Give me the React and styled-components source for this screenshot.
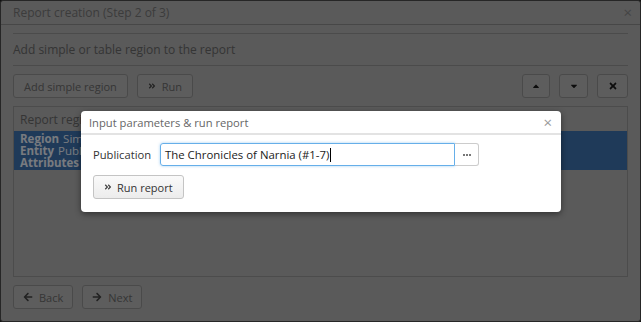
import React from "react";
import styled, { createGlobalStyle } from "styled-components";
import { FaAngleDoubleRight, FaArrowLeft, FaArrowRight, FaCaretDown, FaCaretUp, FaTimes } from "react-icons/fa";

const GlobalStyle = createGlobalStyle`
    html, body {
        margin: 0;
        padding: 0;
        background: #222;
    }
    body {
        font-family: "Open Sans", "Liberation Sans", sans-serif;
        font-size: 11px;
    }
    * { box-sizing: border-box; }
`;

const Stage = styled.div`
    position: relative;
    width: 641px;
    height: 322px;
    overflow: hidden;
`;

const Window = styled.div`
    width: 100%;
    height: 100%;
    display: flex;
    flex-direction: column;
    background: #b4b4b4;
    border: 1px solid #4c4c4c;
    border-radius: 3px;
    color: #6e6e6e;
`;

const TitleBar = styled.div`
    height: 24px;
    flex: none;
    display: flex;
    align-items: center;
    justify-content: space-between;
    padding: 0 8px 0 12px;
    border-bottom: 1px solid #8e8e8e;
    font-size: 12px;
    color: #787878;
`;

const CloseMark = styled.span`
    font-size: 15px;
    line-height: 1;
    color: ${p => p.$light ? "#9a9a9a" : "#8a8a8a"};
`;

const Body = styled.div`
    flex: 1;
    display: flex;
    flex-direction: column;
    padding: 8px 12px 12px 12px;
    min-height: 0;
`;

const Intro = styled.div`
    height: 33px;
    display: flex;
    align-items: center;
    border-top: 1px solid #969696;
    border-bottom: 1px solid #969696;
    font-size: 12px;
    color: #6a6a6a;
`;

const Toolbar = styled.div`
    display: flex;
    align-items: center;
    gap: 9px;
    margin-top: 8px;
`;

const Spacer = styled.div`
    flex: 1;
`;

const Button = styled.button`
    height: 24px;
    padding: 0 ${p => p.$pad || 10}px;
    display: inline-flex;
    align-items: center;
    justify-content: center;
    gap: 6px;
    font-family: inherit;
    font-size: 11px;
    color: #6c6c6c;
    background: #bababa;
    border: 1px solid #959595;
    border-radius: 3px;
    svg { color: #444; }
`;

const IconButton = styled(Button)`
    width: ${p => p.$w}px;
    padding: 0;
    svg { color: #1a1a1a; }
`;

const Table = styled.div`
    flex: 1;
    margin-top: 8px;
    border: 1px solid #989898;
    display: flex;
    flex-direction: column;
`;

const TableHead = styled.div`
    height: 24px;
    display: flex;
    align-items: center;
    padding: 0 6px;
    font-size: 12px;
    color: #6a6a6a;
`;

const SelectedRow = styled.div`
    background: #3e74b2;
    padding: 2px 6px 1px;
    color: #f0f6ff;
    line-height: 12px;
    font-size: 11.5px;
`;

const RowLine = styled.div`
    b { font-weight: 700; margin-right: 4px; }
`;

const Footer = styled.div`
    display: flex;
    gap: 9px;
    margin-top: 8px;
`;

const Backdrop = styled.div`
    position: absolute;
    inset: 0;
    background: rgba(0, 0, 0, 0.5);
`;

const Modal = styled.div`
    position: absolute;
    left: 81px;
    top: 111px;
    width: 480px;
    height: 101px;
    background: #fff;
    border-radius: 4px;
    box-shadow: 0 2px 6px rgba(0, 0, 0, 0.45);
    display: flex;
    flex-direction: column;
`;

const ModalHead = styled.div`
    height: 24px;
    display: flex;
    align-items: center;
    justify-content: space-between;
    padding: 0 9px 0 8px;
    border-bottom: 2px solid #e3e3e3;
    font-size: 11.2px;
    color: #666;
`;

const ModalBody = styled.div`
    padding: 8px 12px 12px;
    display: flex;
    flex-direction: column;
    align-items: flex-start;
    gap: 9px;
`;

const FieldRow = styled.div`
    display: flex;
    align-items: center;
`;

const Label = styled.span`
    width: 67px;
    font-size: 11.2px;
    color: #333;
`;

const TextBox = styled.div`
    width: 295px;
    height: 23px;
    display: flex;
    align-items: center;
    padding: 0 4px;
    border: 1px solid #66afe9;
    border-radius: 3px 0 0 3px;
    box-shadow: 0 0 3px rgba(102, 175, 233, 0.6);
    font-size: 11.4px;
    color: #222;
`;

const Caret = styled.span`
    display: inline-block;
    width: 1px;
    height: 14px;
    background: #000;
    margin-left: 1px;
`;

const DotsButton = styled.button`
    width: 24px;
    height: 23px;
    display: flex;
    align-items: center;
    justify-content: center;
    gap: 1px;
    background: #fff;
    border: 1px solid #ccc;
    border-left: none;
    border-radius: 0 3px 3px 0;
    padding: 0;
`;

const Dot = styled.i`
    width: 2px;
    height: 2px;
    background: #777;
`;

const RunButton = styled.button`
    height: 24px;
    padding: 0 10px;
    display: inline-flex;
    align-items: center;
    gap: 5px;
    font-family: inherit;
    font-size: 11px;
    color: #333;
    background: linear-gradient(#fafafa, #ececec);
    border: 1px solid #c4c4c4;
    border-radius: 3px;
    svg { color: #444; }
`;

export default function App() {
    return <>
        <GlobalStyle />
        <Stage>
            <Window>
                <TitleBar>
                    <span>Report creation (Step 2 of 3)</span>
                    <CloseMark>×</CloseMark>
                </TitleBar>
                <Body>
                    <Intro>Add simple or table region to the report</Intro>
                    <Toolbar>
                        <Button>Add simple region</Button>
                        <Button><FaAngleDoubleRight size={8} />Run</Button>
                        <Spacer />
                        <IconButton $w={28}><FaCaretUp size={10} /></IconButton>
                        <IconButton $w={29}><FaCaretDown size={10} /></IconButton>
                        <IconButton $w={31}><FaTimes size={10} /></IconButton>
                    </Toolbar>
                    <Table>
                        <TableHead>Report regions</TableHead>
                        <SelectedRow>
                            <RowLine><b>Region</b>Simple</RowLine>
                            <RowLine><b>Entity</b>Publication</RowLine>
                            <RowLine><b>Attributes</b></RowLine>
                        </SelectedRow>
                    </Table>
                    <Footer>
                        <Button $pad={9}><FaArrowLeft size={10} />Back</Button>
                        <Button $pad={9}><FaArrowRight size={10} />Next</Button>
                    </Footer>
                </Body>
            </Window>
            <Backdrop />
            <Modal>
                <ModalHead>
                    <span>Input parameters &amp; run report</span>
                    <CloseMark $light>×</CloseMark>
                </ModalHead>
                <ModalBody>
                    <FieldRow>
                        <Label>Publication</Label>
                        <TextBox>The Chronicles of Narnia (#1-7)<Caret /></TextBox>
                        <DotsButton><Dot /><Dot /><Dot /></DotsButton>
                    </FieldRow>
                    <RunButton><FaAngleDoubleRight size={8} />Run report</RunButton>
                </ModalBody>
            </Modal>
        </Stage>
    </>;
}
